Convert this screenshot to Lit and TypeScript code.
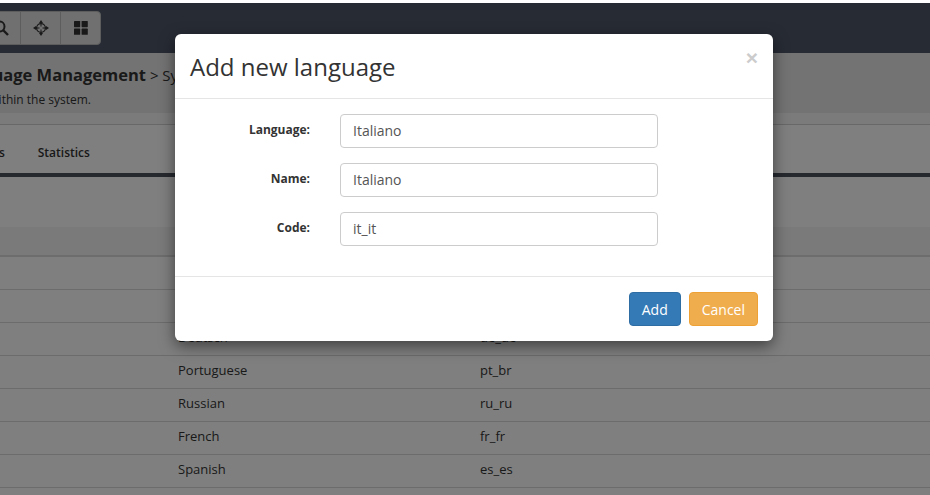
import { LitElement, html, css } from 'lit';
import { customElement } from 'lit/decorators.js';

const rows = [
  { name: 'English', code: 'en_us' },
  { name: 'Italian', code: 'it_it' },
  { name: 'Deutsch', code: 'de_de' },
  { name: 'Portuguese', code: 'pt_br' },
  { name: 'Russian', code: 'ru_ru' },
  { name: 'French', code: 'fr_fr' },
  { name: 'Spanish', code: 'es_es' },
];

@customElement('app-root')
export class AppRoot extends LitElement {
  static styles = css`
    :host {
      display: block;
      position: relative;
      width: 930px;
      height: 495px;
      overflow: hidden;
      background: #fff;
      font-family: 'Open Sans', 'Noto Sans', sans-serif;
      color: #333;
      font-size: 13px;
    }
    .page {
      width: 1100px;
      margin-left: -60px;
      padding-top: 3px;
    }
    .navbar {
      height: 50px;
      background: #4e5668;
      padding: 8px 0 0 40px;
      box-sizing: border-box;
      display: flex;
      align-items: flex-start;
    }
    .tools {
      display: flex;
      height: 34px;
      background: #e0e0e0;
      border: 1px solid #bbb;
      border-radius: 4px;
      box-sizing: border-box;
    }
    .tools span {
      width: 39px;
      display: flex;
      align-items: center;
      justify-content: center;
      border-left: 1px solid #bbb;
      box-sizing: content-box;
    }
    .tools span:first-child {
      border-left: none;
    }
    .heading {
      height: 60px;
      background: #e6e6e6;
      padding: 12px 0 0 13px;
      box-sizing: border-box;
    }
    .heading h1 {
      margin: 0;
      font-size: 15px;
      font-weight: 400;
      line-height: 20px;
      white-space: nowrap;
    }
    .heading h1 b {
      font-size: 16.5px;
    }
    .heading p {
      margin: 7px 0 0 -13px;
      width: 151px;
      display: flex;
      justify-content: flex-end;
      font-size: 12px;
      line-height: 16px;
      white-space: nowrap;
    }
    .band {
      height: 11px;
      background: #f6f6f6;
      border-bottom: 1px solid #d0d0d0;
    }
    .tabs {
      display: flex;
      height: 52px;
      box-sizing: border-box;
      padding: 6px 0 0 3px;
      border-bottom: 4px solid #4c525c;
      align-items: center;
      gap: 33px;
      font-weight: 600;
      font-size: 12px;
      background: #fff;
    }
    .spacer {
      height: 50px;
    }
    table {
      border-collapse: separate;
      border-spacing: 0;
      width: 100%;
      table-layout: fixed;
    }
    thead th {
      height: 28px;
      padding: 0;
      background: #f4f4f4;
      border-bottom: 2px solid #dadada;
    }
    td {
      height: 28px;
      padding: 0 0 4px;
      border-bottom: 1px solid #d8d8d8;
    }
    .c1 { width: 238px; }
    .c2 { width: 302px; }
    .backdrop {
      position: absolute;
      inset: 3px 0 0 0;
      background: rgba(0, 0, 0, 0.5);
    }
    .modal {
      position: absolute;
      left: 175px;
      top: 34px;
      width: 598px;
      height: 307px;
      background: #fff;
      border-radius: 6px;
      box-shadow: 0 5px 15px rgba(0, 0, 0, 0.5);
    }
    .modal-head {
      height: 65px;
      box-sizing: border-box;
      border-bottom: 1px solid #e5e5e5;
      padding: 15px;
      display: flex;
      justify-content: space-between;
    }
    .modal-head h2 {
      margin: 0;
      font-size: 24px;
      font-weight: 400;
      line-height: 36px;
      color: #333;
    }
    .close {
      font-family: 'Liberation Sans', sans-serif;
      font-size: 21px;
      font-weight: 700;
      line-height: 18px;
      color: #ccc;
    }
    .modal-body {
      height: 178px;
      box-sizing: border-box;
      padding-top: 15px;
      border-bottom: 1px solid #e5e5e5;
      display: flex;
      flex-direction: column;
      gap: 15px;
    }
    .field {
      display: flex;
      height: 34px;
    }
    .field label {
      width: 135px;
      text-align: right;
      font-weight: 700;
      font-size: 12px;
      line-height: 32px;
      color: #333;
    }
    .field input {
      margin-left: 30px;
      width: 318px;
      height: 34px;
      box-sizing: border-box;
      border: 1px solid #ccc;
      border-radius: 4px;
      padding: 0 12px 2px;
      font: inherit;
      font-size: 14px;
      color: #555;
      outline: none;
    }
    .modal-foot {
      display: flex;
      justify-content: flex-end;
      gap: 8px;
      padding: 15px;
    }
    button {
      height: 34px;
      padding: 0 12px;
      border-radius: 4px;
      font: inherit;
      font-size: 14px;
      color: #fff;
      border: 1px solid;
    }
    .add { background: #337ab7; border-color: #2e6da4; }
    .cancel { background: #f0ad4e; border-color: #eea236; }
  `;

  render() {
    return html`
      <div class="page">
        <div class="navbar">
          <div class="tools">
            <span>
              <svg width="16" height="16" viewBox="0 0 16 16">
                <circle cx="6.5" cy="6.5" r="5" fill="none" stroke="#333" stroke-width="2"></circle>
                <path d="M10 10l5 5" stroke="#333" stroke-width="2.4"></path>
              </svg>
            </span>
            <span>
              <svg width="16" height="16" viewBox="0 0 16 16">
                <circle cx="8" cy="8" r="4.4" fill="none" stroke="#333" stroke-width="1.3"></circle>
                <path d="M8 0l2 3H6zM8 16l-2-3h4zM0 8l3-2v4zM16 8l-3 2V6z" fill="#333"></path>
                <path d="M8 3v3.5M8 9.5V13M3 8h3.5M9.5 8H13" stroke="#333" stroke-width="1"></path>
              </svg>
            </span>
            <span>
              <svg width="14" height="14" viewBox="0 0 14 14" fill="#333">
                <rect width="6.2" height="6.2" rx="0.6"></rect>
                <rect x="7.6" width="6.2" height="6.2" rx="0.6"></rect>
                <rect y="7.6" width="6.2" height="6.2" rx="0.6"></rect>
                <rect x="7.6" y="7.6" width="6.2" height="6.2" rx="0.6"></rect>
              </svg>
            </span>
          </div>
        </div>
        <div class="heading">
          <h1><b>Language Management</b> &gt; System languages</h1>
          <p>Manage the languages available within the system.</p>
        </div>
        <div class="band"></div>
        <div class="tabs">
          <span>Languages</span>
          <span>Statistics</span>
        </div>
        <div class="spacer"></div>
        <table>
          <thead><tr><th class="c1"></th><th class="c2"></th><th></th></tr></thead>
          <tbody>
            ${rows.map((r) => html`<tr><td></td><td>${r.name}</td><td>${r.code}</td></tr>`)}
          </tbody>
        </table>
      </div>
      <div class="backdrop"></div>
      <div class="modal">
        <div class="modal-head">
          <h2>Add new language</h2>
          <span class="close">×</span>
        </div>
        <div class="modal-body">
          <div class="field"><label>Language:</label><input value="Italiano" /></div>
          <div class="field"><label>Name:</label><input value="Italiano" /></div>
          <div class="field"><label>Code:</label><input value="it_it" /></div>
        </div>
        <div class="modal-foot">
          <button class="add">Add</button>
          <button class="cancel">Cancel</button>
        </div>
      </div>
    `;
  }
}
